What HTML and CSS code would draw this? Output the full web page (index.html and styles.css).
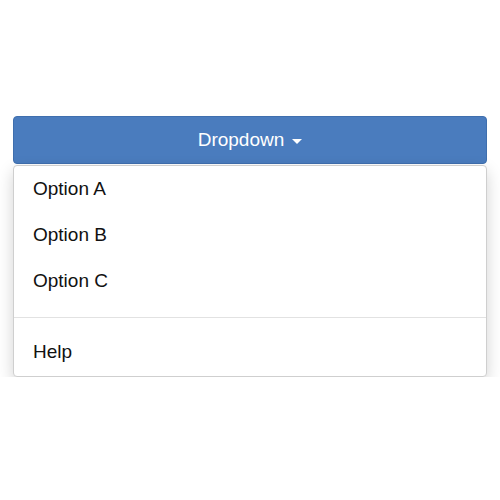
FILE: index.html
```html
<!DOCTYPE html>
<html>
<head>
<meta charset="utf-8">
<link rel="stylesheet" href="styles.css">
</head>
<body>
<div class="dropdown">
  <button class="toggle">Dropdown<span class="caret"></span></button>
  <ul class="menu">
    <li class="item">Option A</li>
    <li class="item">Option B</li>
    <li class="item">Option C</li>
    <li class="divider"></li>
    <li class="item">Help</li>
  </ul>
</div>
</body>
</html>
```
FILE: styles.css
```css
html, body {
  margin: 0;
  padding: 0;
  background: #fff;
}
body {
  padding: 116px 13px 0;
  font-family: "Liberation Sans", Arial, sans-serif;
  font-size: 19px;
}
.dropdown {
  display: flex;
  flex-direction: column;
  gap: 1px;
}
.toggle {
  height: 48px;
  width: 100%;
  background: #4a7cbe;
  border: 1px solid #3f6fae;
  border-radius: 4px;
  color: #fff;
  font-family: inherit;
  font-size: 19px;
  display: flex;
  align-items: center;
  justify-content: center;
  padding: 0;
}
.caret {
  display: inline-block;
  width: 0;
  height: 0;
  margin-left: 8px;
  margin-top: 2px;
  border-top: 5px solid #fff;
  border-left: 5px solid transparent;
  border-right: 5px solid transparent;
}
.menu {
  list-style: none;
  margin: 0;
  padding: 0 0 1px;
  background: #fff;
  border: 1px solid #cfcfcf;
  border-radius: 4px;
  box-shadow: 0 6px 16px rgba(0, 0, 0, 0.18);
}
.item {
  height: 46px;
  line-height: 46px;
  padding: 0 19px;
  color: #111;
}
.divider {
  height: 1px;
  background: #e2e2e2;
  margin: 13px 0 11px;
}
```
